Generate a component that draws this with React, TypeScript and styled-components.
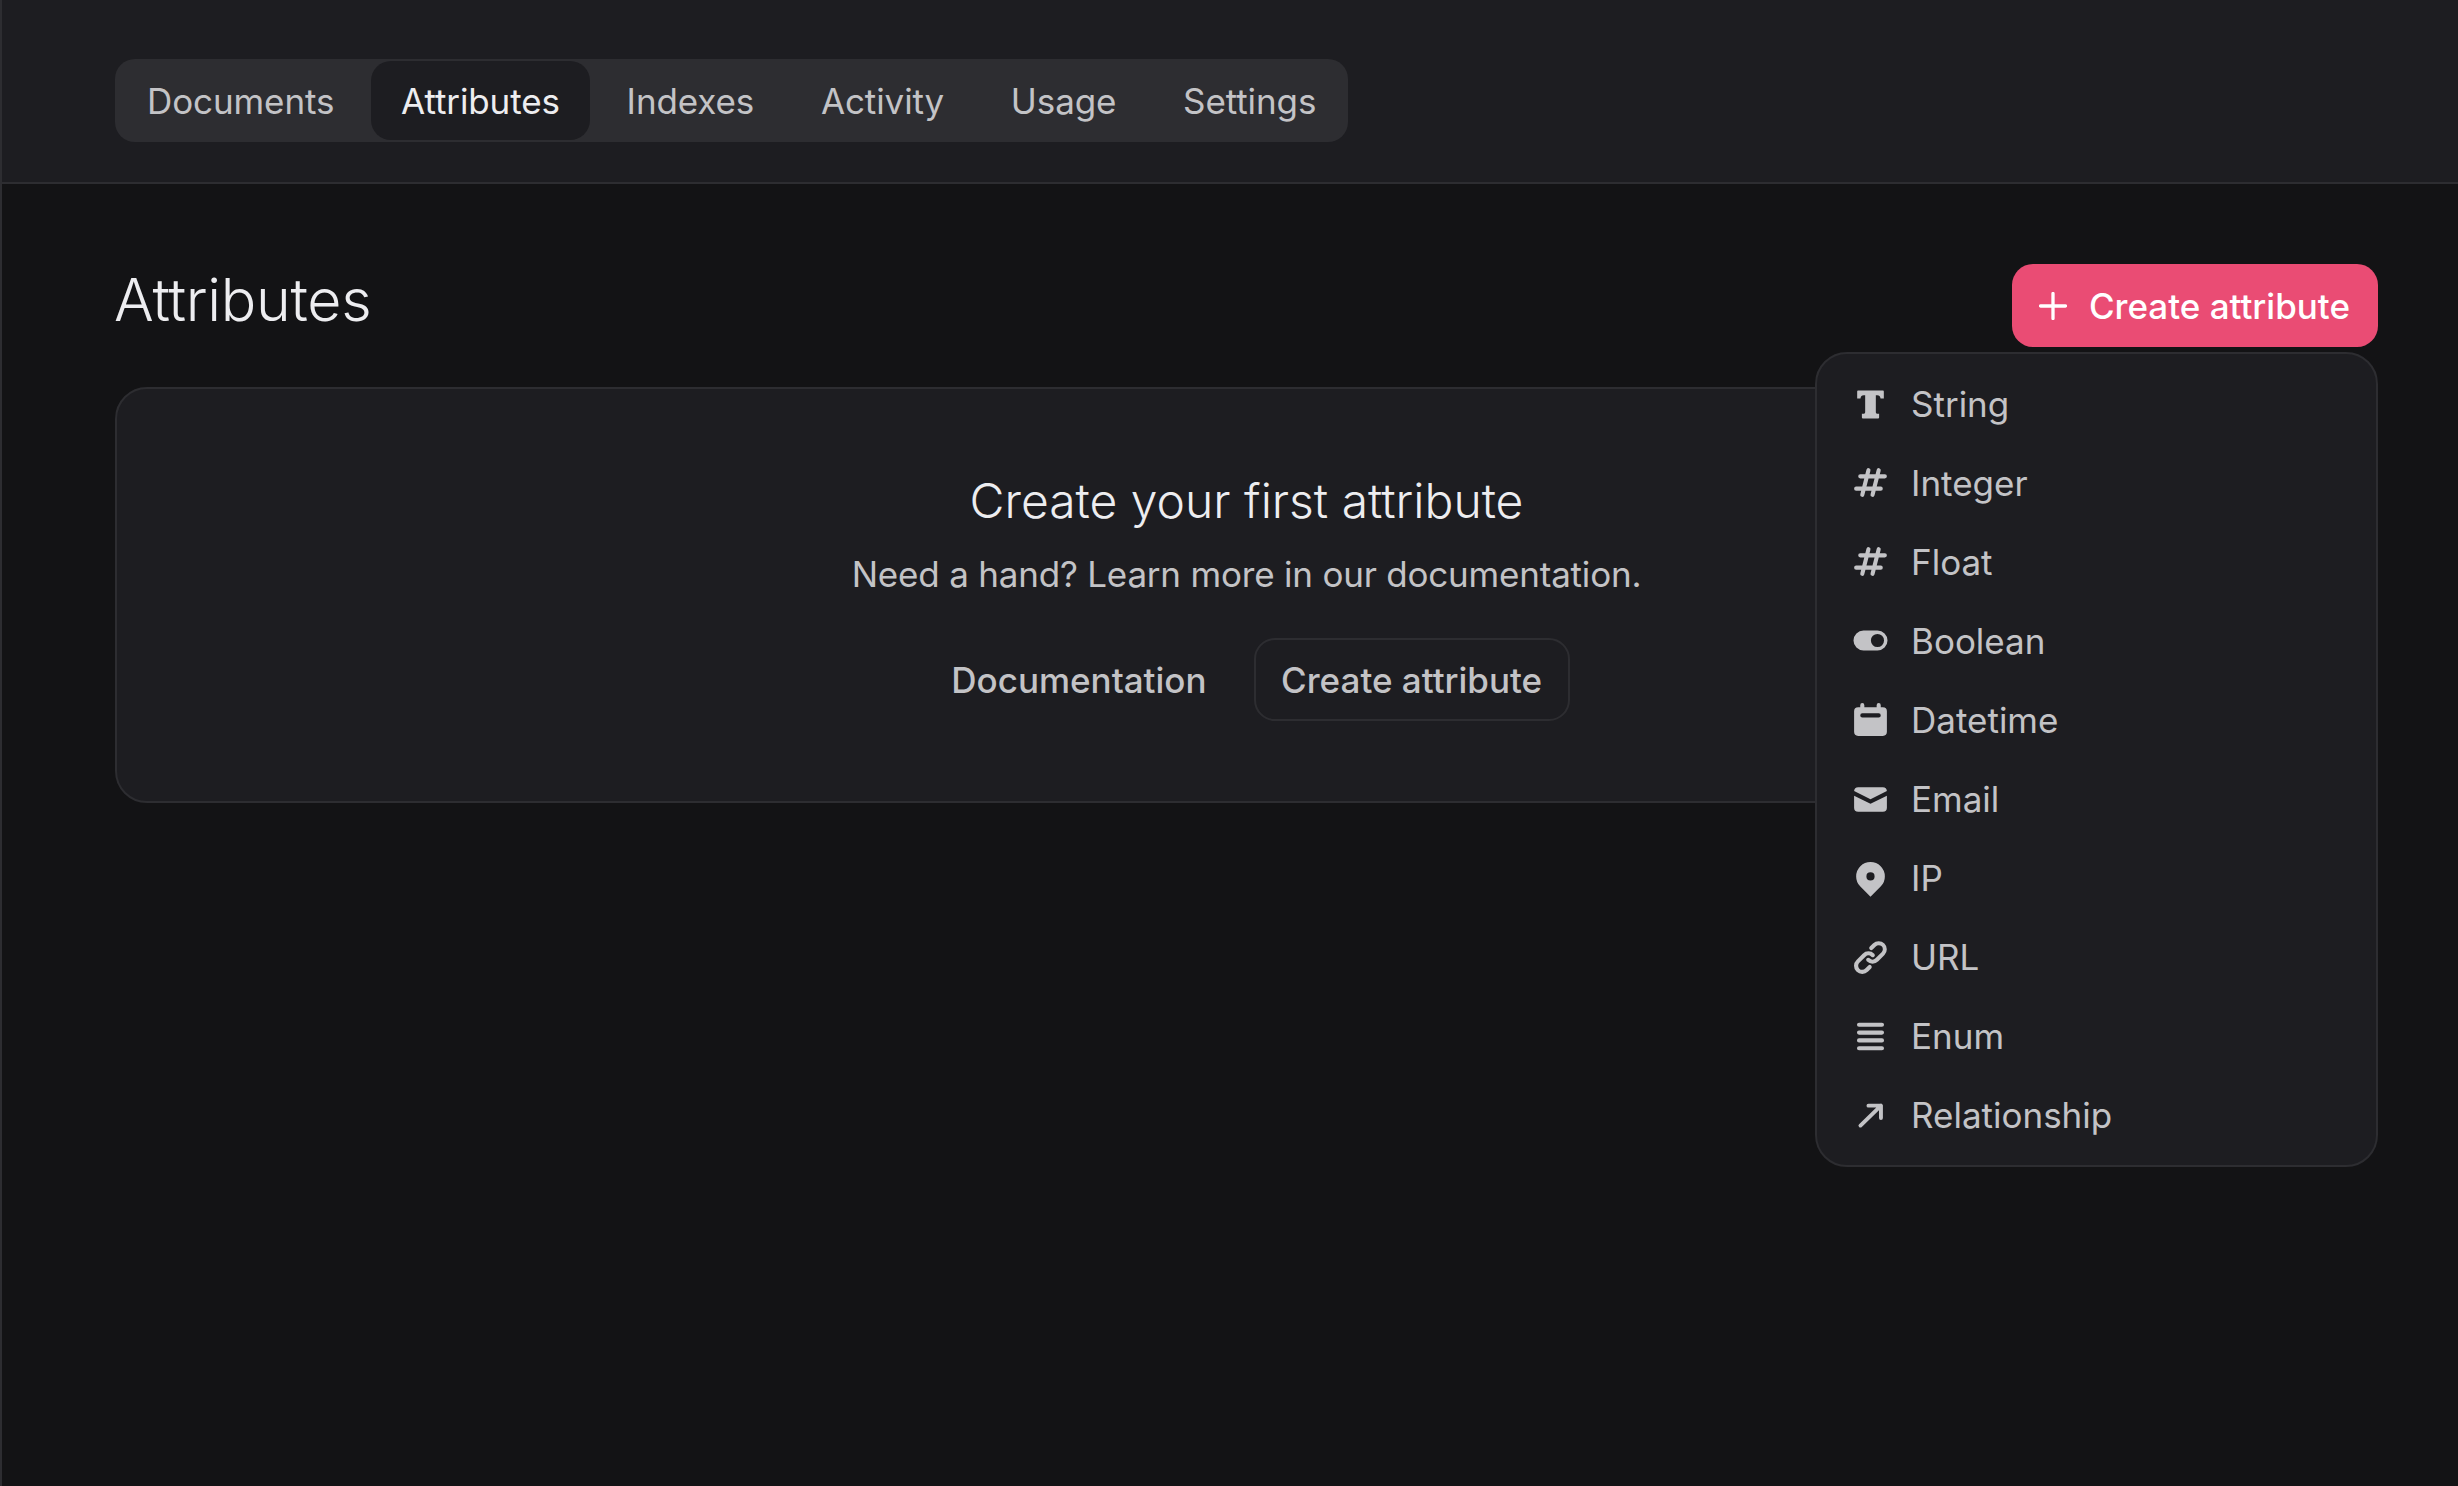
import styled, { createGlobalStyle } from "styled-components";
import { ReactNode } from "react";

const tabs = ["Documents", "Attributes", "Indexes", "Activity", "Usage", "Settings"];

const HashIcon = (
  <path d="M9.243 3.03a1 1 0 01.727 1.213L9.53 6h2.94l.56-2.243a1 1 0 111.94.486L14.53 6H17a1 1 0 110 2h-2.97l-1 4H15a1 1 0 110 2h-2.47l-.56 2.242a1 1 0 11-1.94-.485L10.47 14H7.53l-.56 2.242a1 1 0 11-1.94-.485L5.47 14H3a1 1 0 110-2h2.97l1-4H5a1 1 0 110-2h2.47l.56-2.243a1 1 0 011.213-.727zM9.03 8l-1 4h2.938l1-4H9.031z" fillRule="evenodd" />
);

const attributeTypes: { label: string; icon: ReactNode }[] = [
  {
    label: "String",
    icon: (
      <path d="M3.9 3.7H16.1a.4.4 0 01.4.4V7.5H14.9c-.2-1-.6-1.5-1.6-1.5H12.6V14c0 .7.2 1 1 1h.6V16.8a.5.5 0 01-.5.5H6.3a.5.5 0 01-.5-.5V15h.6c.8 0 1-.3 1-1V6H6.7c-1 0-1.4.5-1.6 1.5H3.5V4.1a.4.4 0 01.4-.4z" />
    ),
  },
  { label: "Integer", icon: HashIcon },
  { label: "Float", icon: HashIcon },
  {
    label: "Boolean",
    icon: (
      <path d="M6.6 5.1h6.8a4.9 4.9 0 010 9.8H6.6a4.9 4.9 0 010-9.8zM13.4 13.2a3.2 3.2 0 100-6.4 3.2 3.2 0 000 6.4z" fillRule="evenodd" />
    ),
  },
  {
    label: "Datetime",
    icon: (
      <path d="M6 2a1 1 0 00-1 1v1H4a2 2 0 00-2 2v10a2 2 0 002 2h12a2 2 0 002-2V6a2 2 0 00-2-2h-1V3a1 1 0 10-2 0v1H7V3a1 1 0 00-1-1zm0 5a1 1 0 000 2h8a1 1 0 100-2H6z" fillRule="evenodd" />
    ),
  },
  {
    label: "Email",
    icon: (
      <>
        <path d="M2.003 5.884L10 9.882l7.997-3.998A2 2 0 0016 4H4a2 2 0 00-1.997 1.884z" />
        <path d="M18 8.118l-8 4-8-4V14a2 2 0 002 2h12a2 2 0 002-2V8.118z" />
      </>
    ),
  },
  {
    label: "IP",
    icon: (
      <path d="M5.05 4.05a7 7 0 119.9 9.9L10 18.9l-4.95-4.95a7 7 0 010-9.9zM10 11a2 2 0 100-4 2 2 0 000 4z" fillRule="evenodd" />
    ),
  },
  {
    label: "URL",
    icon: (
      <>
        <path d="M12.586 4.586a2 2 0 112.828 2.828l-3 3a2 2 0 01-2.828 0 1 1 0 00-1.414 1.414 4 4 0 005.656 0l3-3a4 4 0 00-5.656-5.656l-1.5 1.5a1 1 0 101.414 1.414l1.5-1.5z" />
        <path d="M7.586 9.586a2 2 0 012.828 0 1 1 0 001.414-1.414 4 4 0 00-5.656 0l-3 3a4 4 0 105.656 5.656l1.5-1.5a1 1 0 00-1.414-1.414l-1.5 1.5a2 2 0 11-2.828-2.828l3-3z" />
      </>
    ),
  },
  {
    label: "Enum",
    icon: (
      <path d="M4.4 3.3h11.2a1 1 0 010 2H4.4a1 1 0 010-2zm0 3.8h11.2a1 1 0 010 2H4.4a1 1 0 010-2zm0 3.8h11.2a1 1 0 010 2H4.4a1 1 0 010-2zm0 3.8h11.2a1 1 0 010 2H4.4a1 1 0 010-2z" />
    ),
  },
  {
    label: "Relationship",
    icon: (
      <path d="M5.1 14.9L15.1 5.2M9 5.2H15.1V11.2" fill="none" stroke="currentColor" strokeWidth="1.9" strokeLinecap="round" strokeLinejoin="round" />
    ),
  },
];

const App = () => (
  <Page>
    <GlobalStyle />
    <Header>
      <Tabs>
        {tabs.map((tab) => (
          <Tab key={tab} $active={tab === "Attributes"}>
            {tab}
          </Tab>
        ))}
      </Tabs>
    </Header>
    <Main>
      <TitleRow>
        <Title>Attributes</Title>
        <CreateWrap>
          <PrimaryButton>
            <PlusIcon viewBox="0 0 28 28">
              <path d="M14 1.5v25M1.5 14h25" />
            </PlusIcon>
            Create attribute
          </PrimaryButton>
          <Menu>
            {attributeTypes.map((type) => (
              <MenuItem key={type.label}>
                <TypeIcon viewBox="0 0 20 20">{type.icon}</TypeIcon>
                {type.label}
              </MenuItem>
            ))}
          </Menu>
        </CreateWrap>
      </TitleRow>
      <EmptyCard>
        <EmptyTitle>Create your first attribute</EmptyTitle>
        <EmptyText>Need a hand? Learn more in our documentation.</EmptyText>
        <EmptyActions>
          <TextButton>Documentation</TextButton>
          <OutlineButton>Create attribute</OutlineButton>
        </EmptyActions>
      </EmptyCard>
    </Main>
  </Page>
);

export default App;

const GlobalStyle = createGlobalStyle`
  html, body {
    margin: 0;
    padding: 0;
    background: #131315;
  }

  * {
    box-sizing: border-box;
  }
`;

const Page = styled.div`
  width: 2458px;
  height: 1486px;
  overflow: hidden;
  background: #131315;
  border-left: 2px solid #2d2d31;
  font-family: Inter, "Liberation Sans", sans-serif;
  font-size: 35px;
  color: #c3c3c6;
`;

const Header = styled.header`
  height: 184px;
  padding: 59px 0 0 113px;
  background: #1d1d21;
  border-bottom: 2px solid #2d2d31;
`;

const Tabs = styled.nav`
  display: inline-flex;
  gap: 6.7px;
  height: 83px;
  padding: 2px;
  background: #2d2d31;
  border-radius: 20px;
  letter-spacing: -0.1px;
`;

const Tab = styled.div<{ $active?: boolean }>`
  display: flex;
  align-items: center;
  padding: 0 30px;
  border-radius: 20px;
  background: ${(p) => (p.$active ? "#1d1d21" : "transparent")};
  color: ${(p) => (p.$active ? "#ededf0" : "#c3c3c6")};
`;

const Main = styled.main`
  padding: 80px 80px 0 113px;
`;

const TitleRow = styled.div`
  display: flex;
  align-items: center;
  justify-content: space-between;
  height: 83px;
  margin-bottom: 40px;
`;

const Title = styled.h1`
  margin: 0 0 11px -1px;
  font-size: 59px;
  font-weight: 350;
  line-height: 72px;
  letter-spacing: -0.3px;
  color: #ededf0;
`;

const CreateWrap = styled.div`
  position: relative;
`;

const PrimaryButton = styled.button`
  display: flex;
  align-items: center;
  gap: 22px;
  height: 83px;
  padding: 0 28px 0 27px;
  border: 0;
  border-radius: 21px;
  background: #ea4c74;
  color: #fff;
  font: 500 35px Inter, sans-serif;
`;

const PlusIcon = styled.svg`
  width: 28px;
  height: 28px;
  fill: none;
  stroke: #fff;
  stroke-width: 3.3;
  stroke-linecap: round;
`;

const Menu = styled.div`
  position: absolute;
  top: 88px;
  right: 0;
  z-index: 2;
  width: 563px;
  padding: 10px 33px;
  background: #1d1d21;
  border: 2px solid #2d2d31;
  border-radius: 32px;
`;

const MenuItem = styled.div`
  display: flex;
  align-items: center;
  gap: 20px;
  height: 79.1px;
`;

const TypeIcon = styled.svg`
  flex: none;
  width: 41px;
  height: 41px;
  fill: currentColor;
`;

const EmptyCard = styled.section`
  display: flex;
  flex-direction: column;
  align-items: center;
  height: 416px;
  padding-top: 82px;
  background: #1d1d21;
  border: 2px solid #2d2d31;
  border-radius: 32px;
`;

const EmptyTitle = styled.h2`
  margin: 0;
  font-size: 48px;
  font-weight: 350;
  line-height: 60px;
  color: #ededf0;
`;

const EmptyText = styled.p`
  margin: 18px 0 0;
  line-height: 50px;
  letter-spacing: -0.2px;
`;

const EmptyActions = styled.div`
  display: flex;
  gap: 19px;
  margin-top: 39px;
`;

const TextButton = styled.button`
  height: 83px;
  padding: 0 28px;
  border: 0;
  background: transparent;
  color: #c3c3c6;
  font: 500 35px Inter, sans-serif;
`;

const OutlineButton = styled(TextButton)`
  border: 2px solid #2d2d31;
  border-radius: 21px;
  padding: 0 25.5px;
`;
